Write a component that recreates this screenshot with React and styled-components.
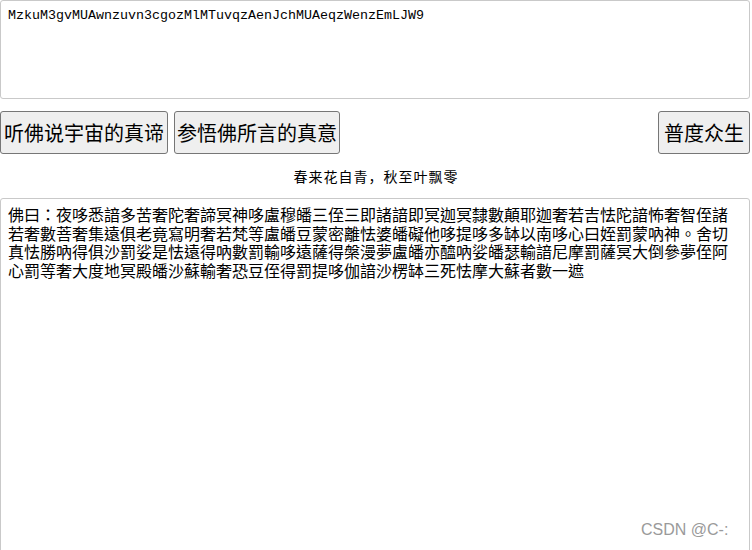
import React from "react";
import styled, { createGlobalStyle } from "styled-components";

const cipherText = "MzkuM3gvMUAwnzuvn3cgozMlMTuvqzAenJchMUAeqzWenzEmLJW9";
const plainText =
  "佛曰：夜哆悉諳多苦奢陀奢諦冥神哆盧穆皤三侄三即諸諳即冥迦冥隸數顛耶迦奢若吉怯陀諳怖奢智侄諸若奢數菩奢集遠俱老竟寫明奢若梵等盧皤豆蒙密離怯婆皤礙他哆提哆多缽以南哆心曰姪罰蒙吶神。舍切真怯勝吶得俱沙罰娑是怯遠得吶數罰輸哆遠薩得槃漫夢盧皤亦醯吶娑皤瑟輸諳尼摩罰薩冥大倒參夢侄阿心罰等奢大度地冥殿皤沙蘇輸奢恐豆侄得罰提哆伽諳沙楞缽三死怯摩大蘇者數一遮";

const GlobalStyle = createGlobalStyle`
  html, body {
    margin: 0;
    padding: 0;
    background: #fff;
    overflow: hidden;
  }
  body {
    font-family: "Noto Sans CJK SC", "Noto Sans", sans-serif;
  }
`;

const App = () => {
  return (
    <>
      <GlobalStyle />
      <Page>
        <CodeBox defaultValue={cipherText} spellCheck={false} />
        <ButtonRow>
          <ActionButton $pad={3}>听佛说宇宙的真谛</ActionButton>
          <ActionButton $pad={2}>参悟佛所言的真意</ActionButton>
          <Spacer />
          <ActionButton $pad={5}>普度众生</ActionButton>
        </ButtonRow>
        <Motto>春来花自青，秋至叶飘零</Motto>
        <SutraWrap>
          <SutraBox defaultValue={plainText} spellCheck={false} />
          <Watermark>CSDN @C-:</Watermark>
        </SutraWrap>
      </Page>
    </>
  );
};

const Page = styled.div`
  display: flex;
  flex-direction: column;
  width: 752px;
`;
const BaseBox = styled.textarea`
  display: block;
  box-sizing: border-box;
  width: 750px;
  margin: 0;
  border: 1px solid #c9c9c9;
  border-radius: 3px;
  resize: none;
  outline: none;
  color: #000;
  background: #fff;
`;
const CodeBox = styled(BaseBox)`
  height: 99px;
  padding: 7px 7px;
  font-family: "Liberation Mono", "DejaVu Sans Mono", monospace;
  font-size: 13.33px;
  line-height: 16px;
`;
const ButtonRow = styled.div`
  display: flex;
  align-items: center;
  gap: 6px;
  width: 750px;
  margin-top: 12px;
`;
const Spacer = styled.div`
  flex: 1;
`;
const ActionButton = styled.button`
  box-sizing: border-box;
  height: 43px;
  padding: 0 ${({ $pad }) => $pad}px;
  border: 1px solid #767676;
  border-radius: 3px;
  background: #efefef;
  color: #000;
  font-family: "Noto Sans CJK SC", "Noto Sans", sans-serif;
  font-size: 20px;
  line-height: 1;
  cursor: pointer;
`;
const Motto = styled.p`
  margin: 12px 0 0;
  height: 32px;
  text-align: center;
  font-size: 14px;
  letter-spacing: 1px;
  line-height: 20px;
  color: #000;
`;
const SutraWrap = styled.div`
  position: relative;
  width: 750px;
`;
const SutraBox = styled(BaseBox)`
  height: 360px;
  padding: 6px 7px;
  font-family: "Noto Sans CJK TC", "Noto Sans CJK SC", sans-serif;
  font-size: 16px;
  line-height: 18.5px;
`;
const Watermark = styled.span`
  position: absolute;
  left: 641px;
  top: 323px;
  font-family: "Liberation Sans", Arial, sans-serif;
  font-size: 16px;
  color: #9a9a9a;
  white-space: nowrap;
`;

export default App;
